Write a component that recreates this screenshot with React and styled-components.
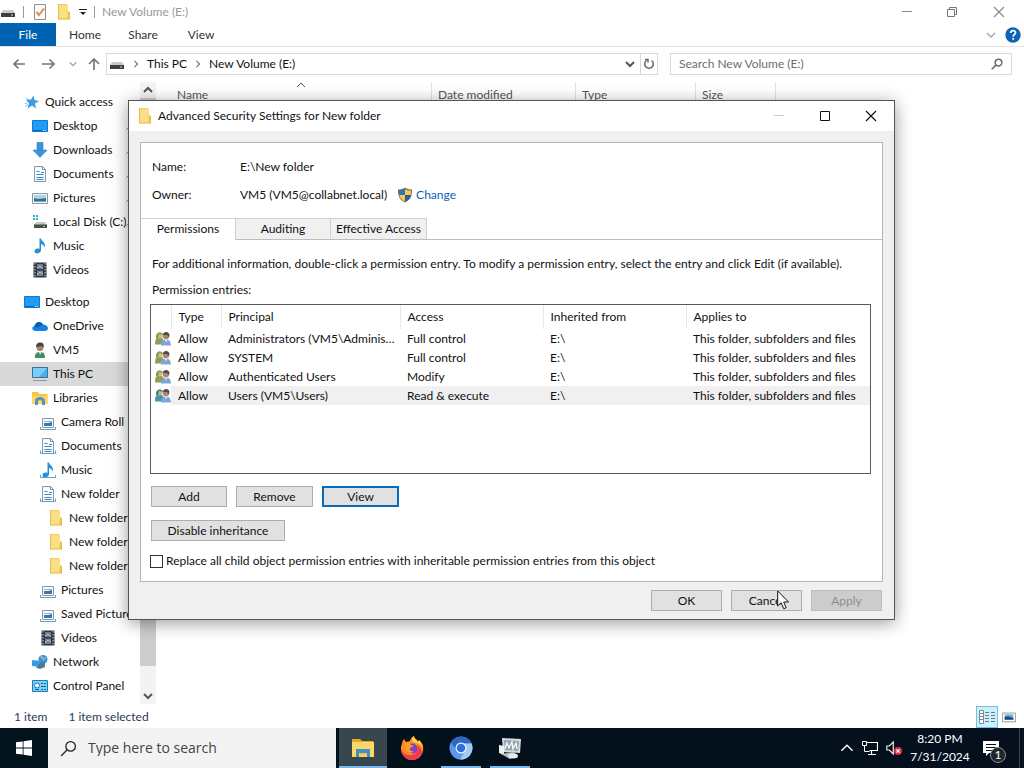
import React from 'react'
import styled, { createGlobalStyle } from 'styled-components'

const GlobalStyle = createGlobalStyle`
    * {
        box-sizing: border-box;
    }

    body {
        margin: 0;
        background: #fff;
        color: #111;
        font-family: Lato, "Open Sans", "Noto Sans", sans-serif;
        font-size: 12px;
        line-height: 16px;
    }

    button, input {
        font: inherit;
        color: inherit;
        border-radius: 0;
        margin: 0;
    }

    svg {
        display: block;
        flex: none;
    }
`

/* ---------- icons ---------- */

const Icon = ({ size = 16, width, height, box, children }) => (
    <svg width={width || size} height={height || size} viewBox={box || '0 0 16 16'} fill="none" aria-hidden="true">
        {children}
    </svg>
)

const DriveIcon = () => (
    <Icon>
        <path d="M3 6h10l2 3H1z" fill="#c9c9c9" />
        <path d="M1 9h14v4H1z" fill="#3c3f43" />
        <path d="M11 11h2" stroke="#cfd8cf" />
    </Icon>
)

const FolderIcon = () => (
    <Icon>
        <path d="M2 0h9l1 2v13.500H2z" fill="#f3cf5b" />
        <path d="M3 1h9v13.500H3z" fill="#fbdf86" />
        <path d="M12 7l2 1v7.500H2v-1h9z" fill="#f0c64e" />
        <path d="M2.500 0v15M13.500 8v7.500" stroke="#e6bd48" />
    </Icon>
)

const CheckPageIcon = () => (
    <Icon>
        <path d="M2.500.5h11v15h-11z" fill="#fafafa" stroke="#8d8d8d" />
        <path d="M4.500 8l2.500 3 5-6.500" stroke="#e08a4c" strokeWidth="2" />
    </Icon>
)

const StarIcon = () => (
    <Icon>
        <path d="M9.500 1.500l1 4.500 4.500 1-4 2.500 1 5-4-3-4.500 3 1.500-5L2 6l5-.5z" fill="#3d9be0" />
        <path d="M1 12.500l3-2M2 4.500l3 1M1 9.500h2" stroke="#7cc0ef" />
    </Icon>
)

const DesktopIcon = () => (
    <Icon>
        <path d="M.5 2.500h15v11H.5z" fill="#1e9bf5" stroke="#1477c9" />
        <path d="M1 12.500h9" stroke="#0d6cbb" />
        <path d="M11 12.500h1M13 12.500h1" stroke="#c9e8ff" />
    </Icon>
)

const DownloadIcon = () => (
    <Icon>
        <path d="M5 .5h6V8h4l-7 7.500L1 8h4z" fill="#3a93dd" stroke="#2b7cc2" strokeWidth=".6" />
    </Icon>
)

const DocumentIcon = ({ tray }) => (
    <Icon>
        <path d="M2.500.5h8l3 3v12h-11z" fill="#f6fafd" stroke="#8398ac" />
        <path d="M10.500.5v3h3" stroke="#8398ac" />
        <path d="M4.500 5.500h3M4.500 8.500h7M4.500 11.500h7M4.500 13.500h7M9 6.500h3" stroke="#4385bd" />
        {tray && <path d="M.5 12.500v3h15v-3M1 15.500h14" stroke="#5e9dcc" />}
    </Icon>
)

const PictureIcon = () => (
    <Icon>
        <path d="M.5 3.500h15v10H.5z" fill="#f4f7f9" stroke="#8b969e" />
        <path d="M2 5h12v7H2z" fill="#a9d5ee" />
        <path d="M2 8l4 1 8-1v4H2z" fill="#3a6f8c" />
        <path d="M2 11.500h12" stroke="#6fa8c8" />
    </Icon>
)

const PictureTrayIcon = () => (
    <Icon>
        <path d="M2.500 4.500h11v9h-11z" fill="#f4f8fb" stroke="#8699aa" />
        <path d="M4 9h4l4-1v4H4z" fill="#3f77a8" />
        <path d="M4 7.500h8" stroke="#8fb9da" />
        <path d="M.5 13v2.500h15V13" stroke="#5e9dcc" />
    </Icon>
)

const DiskIcon = () => (
    <Icon>
        <path d="M1 1h2v2H1zM4 1h2v2H4zM1 4h2v2H1zM4 4h2v2H4z" fill="#22b7c4" />
        <path d="M4 8h9l2 3H2z" fill="#c4c9c6" />
        <path d="M2 10.500h13V14H2z" fill="#45504a" />
        <path d="M11 12.500h2" stroke="#6fe07a" />
    </Icon>
)

const MusicIcon = ({ tray }) => (
    <Icon>
        <path d="M7.500.5H9c.5 3 5.500 4 3.500 9-.3-2-1.500-3-3.500-3.500V12c0 4-6.500 4.500-6.500 1.500 0-2.500 2.500-3.500 5-2.500z" fill="#2491d6" />
        {tray && <path d="M.5 13v2.500h15V13" stroke="#5e9dcc" />}
    </Icon>
)

const VideoIcon = () => (
    <Icon>
        <path d="M1.500.5h13v15h-13z" fill="#30343a" />
        <path d="M5 2h6v5H5zM5 8.500h6V14H5z" fill="#6d8294" />
        <path d="M5 6l3-2 3 3M5 13l3-3 3 2" stroke="#b9c9d6" />
        <path d="M3 1v14M13 1v14" stroke="#d7dade" strokeDasharray="1.500 1.500" />
    </Icon>
)

const CloudIcon = () => (
    <Icon>
        <path d="M3 13C-.5 12.500-.5 8.500 2.500 8 3 4 8.500 2 11 6.500c3 0 5 2 5 4 0 1.500-1.500 2.500-3 2.500z" fill="#1583dc" />
        <path d="M2.500 8C4 3.500 8.500 2.500 11 6.500L5 10z" fill="#0b5cb4" />
    </Icon>
)

const UserIcon = () => (
    <Icon>
        <path d="M3 16c-.5-4 1.500-6 5-6s5 2 5 6z" fill="#3c8f66" />
        <path d="M7 10l1 3 1.500-3z" fill="#e8f1ec" />
        <circle cx="8" cy="5.500" r="3.500" fill="#a98463" />
        <path d="M4 5C4 1 7 0 9 .5c3 .5 3 3 2.500 5L9.500 4z" fill="#3f4a3f" />
    </Icon>
)

const PcIcon = () => (
    <Icon>
        <path d="M.5 1.500h15v10H.5z" fill="#4aaef2" stroke="#3d6f96" />
        <path d="M1 2h14L7 11H1z" fill="#7accfb" />
        <path d="M1 14.500h14" stroke="#8b979f" />
    </Icon>
)

const LibraryIcon = () => (
    <Icon>
        <path d="M0 2h6l1 2h8.500v10H0z" fill="#f4c545" />
        <path d="M0 6h15.500v8H0z" fill="#fbd768" />
        <path d="M4.500 15v-3.500c0-4 7-4 7 0V15" stroke="#5b92bd" strokeWidth="3" />
    </Icon>
)

const NetworkIcon = () => (
    <Icon>
        <circle cx="11" cy="5.500" r="4.500" fill="#3f8fca" />
        <path d="M8 3c2 0 3 2 6 1M9 1.500l4 7" stroke="#a9d5ef" strokeWidth=".8" />
        <path d="M0 6l9 1v6l-9-1z" fill="#2f9fe6" />
        <path d="M9 8l4-1v6l-5 2-4-1.500z" fill="#4b7da2" />
    </Icon>
)

const ControlPanelIcon = () => (
    <Icon>
        <path d="M.5 2.500h15v11H.5z" fill="#7dcdf5" stroke="#1881bd" />
        <circle cx="5" cy="7.500" r="2.500" fill="#fff" stroke="#1576b5" />
        <path d="M9 5.500h2M12 5.500h2M9 8.500h5M3 11.500h4M9 11.500h2M12 11.500h2" stroke="#11649c" />
    </Icon>
)

const PinIcon = () => (
    <Icon size={8} box="0 0 8 8">
        <path d="M3 1l4 4M4 2L2 4l2 2 2-2M3 5L0 8" stroke="#999" />
    </Icon>
)

const GroupIcon = ({ blue }) => (
    <Icon>
        <path d="M0 13.500c0-5 1-7 4.500-7S9 9 9 13.500z" fill={blue ? '#4f93a6' : '#8ba05c'} />
        <circle cx="4.500" cy="4.500" r="3" fill={blue ? '#a9c3a0' : '#cdbf85'} />
        <path d="M1 7c-.5-6 6-7 7-3L4 3 3 8z" fill={blue ? '#4b8378' : '#8e9550'} />
        <path d="M6 14.500c0-4 1.500-6 5-6s4.500 2 5 6z" fill="#7fa5d8" />
        <path d="M10 8.500l1 3 1.500-3z" fill="#f0f4fa" />
        <circle cx="11" cy="5" r="3.300" fill="#b28668" />
        <path d="M8 4c0-4 6-4 6.500 0l-1 2-1.500-2z" fill="#524a48" />
    </Icon>
)

const ShieldIcon = () => (
    <Icon>
        <path d="M8 .5c2 1.500 4 2 7 2 0 6-1 10-7 13-6-3-7-7-7-13 3 0 5-.5 7-2z" fill="#6b6a55" />
        <path d="M8 2v6H2.200C2 6.500 2 5 2 3.500 4.500 3.500 6.500 3 8 2z" fill="#2c76c4" />
        <path d="M8 2v6h5.800c.2-1.500.2-3 .2-4.500C11.500 3.500 9.500 3 8 2z" fill="#f6c94b" />
        <path d="M8 8v6.500c-3.500-1.500-5.200-3.500-5.800-6.500z" fill="#f6c94b" />
        <path d="M8 8v6.500c3.500-1.500 5.200-3.500 5.800-6.500z" fill="#2460ab" />
    </Icon>
)

const Chevron = ({ dir = 'down', size = 10, color = '#555', weight = 1.5 }) => {
    const paths = {
        down: 'M1 3l4 4 4-4',
        up: 'M1 7l4-4 4 4',
        right: 'M3 1l4 4-4 4'
    }
    return (
        <Icon size={size} box="0 0 10 10">
            <path d={paths[dir]} stroke={color} strokeWidth={weight} />
        </Icon>
    )
}

const ArrowIcon = ({ d }) => (
    <Icon>
        <path d={d} stroke="#777" strokeWidth="1.700" />
    </Icon>
)

const MinimizeIcon = ({ color }) => (
    <Icon size={12} box="0 0 12 12"><path d="M1 5.500h10" stroke={color} /></Icon>
)

const MaximizeIcon = () => (
    <Icon size={12} box="0 0 12 12"><path d="M1.500 1.500h9v9h-9z" stroke="#111" /></Icon>
)

const RestoreIcon = () => (
    <Icon size={12} box="0 0 12 12">
        <path d="M1.500 3.500h7v7h-7zM3.500 3.500v-2h7v7h-2" stroke="#777" />
    </Icon>
)

const CloseIcon = ({ color }) => (
    <Icon size={12} box="0 0 12 12"><path d="M1 1l10 10M11 1L1 11" stroke={color} strokeWidth="1.200" /></Icon>
)

const HelpIcon = () => (
    <Icon>
        <circle cx="8" cy="8" r="7.700" fill="#0f63b5" />
        <path d="M5.700 6c0-3 4.800-3 4.800-.3 0 1.700-2.300 1.800-2.300 4M8.200 11v1.800" stroke="#fff" strokeWidth="1.700" />
    </Icon>
)

const RefreshIcon = () => (
    <Icon size={12} box="0 0 12 12">
        <path d="M8.500 2.500a4.300 4.300 0 1 1-5 0M2 1.500h3v3" stroke="#666" strokeWidth="1.500" />
    </Icon>
)

const SearchIcon = ({ size, color, weight }) => (
    <Icon size={size}>
        <circle cx="10" cy="6" r="4.500" stroke={color} strokeWidth={weight} />
        <path d="M6.800 9.200L1 15" stroke={color} strokeWidth={weight} />
    </Icon>
)

const MenuArrowIcon = () => (
    <Icon size={8} box="0 0 8 8"><path d="M0 1.500h8" stroke="#222" /><path d="M1 4h6L4 7z" fill="#222" /></Icon>
)

const DetailsViewIcon = () => (
    <Icon>
        <path d="M.5 1.500h4v13h-4z" fill="#fff" stroke="#7c8a92" />
        <path d="M1 4.500h3M1 7.500h3M1 10.500h3" stroke="#7c8a92" />
        <path d="M6 3.500h4M12 3.500h4M6 6.500h4M12 6.500h4M6 9.500h4M12 9.500h4M6 12.500h4M12 12.500h4" stroke="#6c7b84" />
    </Icon>
)

const ThumbViewIcon = () => (
    <Icon size={14}>
        <path d="M.5 3.500h15v10H.5z" fill="#fff" stroke="#8c8f94" />
        <path d="M3 5h10v6H3z" fill="#6fb0dc" />
        <path d="M3 8l4-1 6 2v2H3z" fill="#2a4d77" />
    </Icon>
)

const WindowsIcon = () => (
    <Icon>
        <path d="M0 2.300L6.700 1.400v6.200H0zM7.500 1.300L16 0v7.600H7.500zM0 8.400h6.700v6.200L0 13.700zM7.500 8.400H16V16l-8.500-1.300z" fill="#fff" />
    </Icon>
)

const ExplorerIcon = () => (
    <Icon size={24} box="0 0 24 24">
        <path d="M1 3h8l2 2h11v4H1z" fill="#e9a92d" />
        <path d="M1 6h22v15H1z" fill="#fbd768" />
        <path d="M5 13h14v8h-3v-4H8v4H5z" fill="#3f8fcb" />
        <path d="M8 17h8v2H8z" fill="#f3c14a" />
    </Icon>
)

const FirefoxIcon = () => (
    <Icon size={24} box="0 0 24 24">
        <path d="M2 8c0-2 1-4 2-5l2 3 4-1c0-2 2-4 4-5 0 3 3 3 4 6l1-2c3 3 5 6 4 11-1 5-5 9-11 9S1 19 1 13c0-2 0-3 1-5z" fill="#ff8a1e" />
        <path d="M14 0c0 3 3 3 4 6l1-2c2 2 4 5 4 8-2-4-6-5-10-6-2-2-1-5 1-6z" fill="#ffd43a" />
        <path d="M1 13c2 5 8 8 13 5 3-2 5-5 3-9 3 2 5 5 5 8-2 4-5 7-10 7S1 19 1 13z" fill="#f5384f" />
        <circle cx="12.500" cy="12.500" r="5" fill="#7c43c9" />
        <path d="M5 7c3-1 5 0 6 2l3 1-4 2c-1 2 1 4 4 3-4 4-10 1-9-8z" fill="#ff9a2a" />
    </Icon>
)

const ChromiumIcon = () => (
    <Icon size={24} box="0 0 24 24">
        <circle cx="12" cy="12" r="11.500" fill="#5d97ea" />
        <path d="M2 6.500a11.500 11.500 0 0 1 20.500 1H12L7.500 14z" fill="#2c68c4" />
        <path d="M22.500 7.500A11.500 11.500 0 0 1 11 23.500l5.500-9c1-3 0-5-2-7z" fill="#a9c9f5" />
        <circle cx="12" cy="12" r="5.500" fill="#f1f6fd" />
        <circle cx="12" cy="12" r="4.300" fill="#2d72d9" />
    </Icon>
)

const ServerIcon = () => (
    <Icon size={24} box="0 0 24 24">
        <path d="M4 2l19 1-1 14-17-1z" fill="#d5dadc" />
        <path d="M6 4l15 1-1 10-13-1z" fill="#8fa3ad" />
        <path d="M7 13l2-6 2 5 3-6 1 7 3-6 1 6" stroke="#f6fafb" strokeWidth="1.300" />
        <path d="M1 9l5 1v9l-5-2z" fill="#eceeef" />
        <path d="M3 18l12-2 5 3-8 4z" fill="#b7bec2" />
        <ellipse cx="15" cy="20" rx="5" ry="2.500" fill="#e8ebec" />
    </Icon>
)

const MonitorIcon = () => (
    <Icon>
        <path d="M4.500 2.500h11v8h-8M9.500 11v3M6 14.500h8" stroke="#fff" strokeWidth="1.200" />
        <path d="M.5 1.500h4v4h-4zM2.500 5.500v6h5" stroke="#fff" />
    </Icon>
)

const MutedIcon = () => (
    <Icon>
        <path d="M.8 6h2.500l4-4v12l-4-4H.8z" stroke="#e8e8e8" strokeWidth="1.200" />
        <circle cx="12" cy="11" r="4" fill="#d8323c" />
        <path d="M10.300 9.300l3.400 3.400M13.700 9.300l-3.400 3.400" stroke="#fff" strokeWidth="1.200" />
    </Icon>
)

const MessageIcon = () => (
    <Icon>
        <path d="M0 1h16v12H6l-3 3v-3H0z" fill="#fff" />
        <path d="M3 4.500h10M3 7.500h10M3 10.500h6" stroke="#07101d" />
    </Icon>
)

/* ---------- explorer window ---------- */

const Desktop = styled.div`
    position: relative;
    display: flex;
    flex-direction: column;
    height: 100vh;
    overflow: hidden;
`

const Explorer = styled.main`
    flex: 1;
    min-height: 0;
    display: flex;
    flex-direction: column;
`

const TitleBar = styled.header`
    display: flex;
    align-items: center;
    height: 23px;
    color: #999;
`

const QuickTools = styled.div`
    display: flex;
    align-items: center;
    gap: 7px;
    flex: 1;
`

const Divider = styled.span`
    width: 1px;
    height: 12px;
    background: #999;
`

const IconButton = styled.button`
    display: flex;
    align-items: center;
    justify-content: center;
    width: ${props => props.$width || 16}px;
    height: ${props => props.$height || 16}px;
    padding: 0;
    border: 0;
    background: transparent;
`

const Ribbon = styled.nav`
    display: flex;
    align-items: center;
    height: 24px;
    padding-right: 3px;
    border-bottom: 1px solid #e4e4e4;
`

const RibbonTab = styled.button`
    width: ${props => props.$primary ? 56 : 58}px;
    height: 23px;
    padding: 0;
    border: 0;
    color: ${props => props.$primary ? '#fff' : '#333'};
    background: ${props => props.$primary ? '#0063b1' : 'transparent'};
`

const Spacer = styled.span`
    flex: 1;
`

const AddressRow = styled.div`
    display: flex;
    align-items: center;
    height: 35px;
    padding: 0 12px 2px 11px;
`

const NavButtons = styled.div`
    display: flex;
    align-items: center;
    gap: 13px;
    width: 95px;
`

const AddressBar = styled.div`
    flex: 1;
    display: flex;
    align-items: center;
    gap: 7px;
    height: 22px;
    padding-left: 2px;
    border: 1px solid #d9d9d9;
`

const Crumb = styled.a`
    color: #111;
    text-decoration: none;
`

const RefreshBox = styled.div`
    display: flex;
    align-items: center;
    height: 20px;
    margin-left: -5px;
    border-left: 1px solid #d9d9d9;
`

const SearchBox = styled.label`
    display: flex;
    align-items: center;
    width: 342px;
    height: 22px;
    margin-left: 12px;
    padding: 0 8px;
    border: 1px solid #d9d9d9;

    input {
        flex: 1;
        min-width: 0;
        padding: 0;
        border: 0;
        outline: 0;
        background: transparent;
    }

    input::placeholder {
        color: #6d6d6d;
        opacity: 1;
    }
`

const Body = styled.div`
    flex: 1;
    min-height: 0;
    display: flex;
`

const Tree = styled.ul`
    width: 140px;
    margin: 0;
    padding: 8px 0 0;
    list-style: none;
    overflow: hidden;
`

const TreeRow = styled.li`
    display: flex;
    align-items: center;
    gap: 5px;
    height: 24px;
    margin-top: ${props => props.$gap ? 8 : 0}px;
    padding-left: ${props => 24 + props.$level * 8}px;
    white-space: nowrap;
    background: ${props => props.$selected ? '#d9d9d9' : 'transparent'};
`

const TreeLabel = styled.span`
    flex: 1;
    min-width: 0;
    overflow: hidden;
`

const PinSlot = styled.span`
    width: 14px;
    margin-left: -5px;
`

const Scrollbar = styled.div`
    display: flex;
    flex-direction: column;
    width: 16px;
    background: #f3f3f3;
`

const Thumb = styled.div`
    flex: 1;
    margin-bottom: 22px;
    background: #cdcdcd;
`

const Files = styled.section`
    flex: 1;
    padding-left: 15px;
`

const FileHeader = styled.div`
    display: flex;
    height: 26px;
`

const FileColumn = styled.div`
    position: relative;
    width: ${props => props.$width}px;
    padding: 5px 0 0 6px;
    border-right: 1px solid #e2e2e2;
    color: #555;
`

const SortMark = styled.span`
    position: absolute;
    top: -2px;
    left: calc(50% - 5px);
`

const StatusBar = styled.footer`
    display: flex;
    align-items: center;
    gap: 21px;
    height: 24px;
    padding: 1px 8px 0 14px;
    color: #2b3a57;
`

const ViewModes = styled.div`
    display: flex;
    align-items: center;
    gap: 4px;
    margin-left: auto;
`

const ViewMode = styled(IconButton)`
    width: ${props => props.$active ? 22 : 14}px;
    height: 22px;
    border: ${props => props.$active ? '1px solid #6cc3e4' : '0'};
    background: ${props => props.$active ? '#cdeefa' : 'transparent'};
`

/* ---------- security dialog ---------- */

const Dialog = styled.div`
    position: absolute;
    top: 100px;
    left: 128px;
    right: 129px;
    border: 1px solid #555;
    background: #f0f0f0;
    box-shadow: 0 3px 16px rgba(0, 0, 0, 0.4);
`

const DialogTitle = styled.div`
    display: flex;
    align-items: center;
    gap: 5px;
    height: 30px;
    padding-left: 8px;
    background: #fff;
`

const Title = styled.h1`
    flex: 1;
    margin: 0;
    font-size: 12px;
    font-weight: 400;
`

const WindowButtons = styled.div`
    display: flex;
`

const Panel = styled.div`
    height: 440px;
    margin: 11px 11px 0;
    border: 1px solid #b4b4b4;
    background: #fff;
`

const Facts = styled.dl`
    display: grid;
    grid-template-columns: 88px 1fr;
    row-gap: 12px;
    margin: 0;
    padding: 16px 11px 15px;

    dt, dd {
        margin: 0;
    }

    dd {
        display: flex;
        align-items: center;
    }
`

const ChangeLink = styled.a`
    display: flex;
    gap: 3px;
    margin-left: 10px;
    color: #0b61b5;
    text-decoration: none;
`

const Tabs = styled.div`
    display: flex;
    height: 22px;

    &::after {
        content: '';
        flex: 1;
        border-bottom: 1px solid #bdbdbd;
    }
`

const Tab = styled.button`
    width: ${props => props.$width}px;
    padding: 0;
    border: 1px solid #d0d0d0;
    border-left-width: ${props => props.$active ? 0 : 1}px;
    border-right-width: ${props => props.$last ? 1 : 0}px;
    border-bottom-color: ${props => props.$active ? '#fff' : '#bdbdbd'};
    background: ${props => props.$active ? '#fff' : '#f0f0f0'};
`

const TabBody = styled.div`
    padding: 16px 11px 0 9px;
`

const Note = styled.p`
    margin: 0 0 ${props => props.$gap}px 2px;
    white-space: nowrap;
`

const ListBox = styled.div`
    height: 170px;
    border: 1px solid #5a5a5a;
`

const Table = styled.table`
    width: 100%;
    table-layout: fixed;
    border-collapse: collapse;

    th, td {
        overflow: hidden;
        padding: 0 4px 0 7px;
        text-align: left;
        font-weight: 400;
        white-space: nowrap;
        text-overflow: ellipsis;
    }

    th {
        height: 24px;
        border-left: 1px solid #e8e8e8;
    }

    th:first-child {
        border-left: 0;
    }

    td {
        height: 19px;
    }

    td:first-child {
        padding: 0 0 0 4px;
    }
`

const EntryRow = styled.tr`
    td + td {
        background: ${props => props.$selected ? '#f0f0f0' : 'transparent'};
    }
`

const ButtonRow = styled.div`
    display: flex;
    justify-content: ${props => props.$end ? 'flex-end' : 'flex-start'};
    gap: 9px;
    padding: ${props => props.$end ? '8px 12px' : '12px 1px 1px'};
`

const Button = styled.button`
    position: relative;
    width: ${props => props.$width}px;
    height: 21px;
    padding: 0;
    line-height: 16px;
    border: ${props => props.$focused ? '2px solid #0a6cbd' : '1px solid #adadad'};
    background: #e1e1e1;

    &:disabled {
        border-color: #bfbfbf;
        background: #cccccc;
        color: #8f8f8f;
    }
`

const CheckLabel = styled.label`
    display: flex;
    align-items: center;
    gap: 3px;
    margin-top: 11px;
    white-space: nowrap;

    input {
        appearance: none;
        width: 13px;
        height: 13px;
        border: 1px solid #333;
        background: #fff;
    }
`

const Pointer = styled.span`
    position: absolute;
    top: -1px;
    left: 45px;
`

/* ---------- taskbar ---------- */

const Taskbar = styled.footer`
    display: flex;
    height: 40px;
    background: linear-gradient(90deg, #02131c, #050f1d);
    color: #fff;
`

const TaskSearch = styled.label`
    display: flex;
    align-items: center;
    gap: 11px;
    width: 288px;
    margin-right: 3px;
    padding-left: 12px;
    background: #f3f3f3;

    input {
        flex: 1;
        min-width: 0;
        padding: 0;
        border: 0;
        outline: 0;
        background: transparent;
        font-family: "Open Sans", "Noto Sans", sans-serif;
        font-size: 14px;
    }

    input::placeholder {
        color: #444;
        opacity: 1;
    }
`

const TaskButton = styled.button`
    display: flex;
    align-items: center;
    justify-content: center;
    width: 48px;
    margin-right: 1px;
    padding: 0;
    border: 0;
    background:
        linear-gradient(#76b9ed, #76b9ed) bottom / ${props => props.$active ? 48 : props.$open ? 40 : 0}px 2px no-repeat,
        ${props => props.$active ? '#38464e' : 'transparent'};
`

const Tray = styled.div`
    display: flex;
    align-items: center;
    gap: 8px;
    margin: 0 4px 0 auto;
    padding-right: 20px;
    border-right: 1px solid #3a424c;
`

const Clock = styled.time`
    width: 60px;
    margin-right: 5px;
    line-height: 18px;
    text-align: center;
`

const Notifications = styled.button`
    position: relative;
    padding: 0;
    border: 0;
    background: transparent;
`

const Badge = styled.span`
    position: absolute;
    top: 7px;
    left: 7px;
    width: 16px;
    height: 16px;
    border: 1px solid #8a8f96;
    border-radius: 50%;
    background: #1f262e;
    color: #fff;
    font-size: 12px;
    line-height: 14px;
`

const tree = [
    { label: 'Quick access', icon: <StarIcon />, level: 0 },
    { label: 'Desktop', icon: <DesktopIcon />, level: 1, pinned: true },
    { label: 'Downloads', icon: <DownloadIcon />, level: 1, pinned: true },
    { label: 'Documents', icon: <DocumentIcon />, level: 1, pinned: true },
    { label: 'Pictures', icon: <PictureIcon />, level: 1, pinned: true },
    { label: 'Local Disk (C:)', icon: <DiskIcon />, level: 1, pinned: true },
    { label: 'Music', icon: <MusicIcon />, level: 1 },
    { label: 'Videos', icon: <VideoIcon />, level: 1 },
    { label: 'Desktop', icon: <DesktopIcon />, level: 0, gap: true },
    { label: 'OneDrive', icon: <CloudIcon />, level: 1 },
    { label: 'VM5', icon: <UserIcon />, level: 1 },
    { label: 'This PC', icon: <PcIcon />, level: 1, selected: true },
    { label: 'Libraries', icon: <LibraryIcon />, level: 1 },
    { label: 'Camera Roll', icon: <PictureTrayIcon />, level: 2 },
    { label: 'Documents', icon: <DocumentIcon tray />, level: 2 },
    { label: 'Music', icon: <MusicIcon tray />, level: 2 },
    { label: 'New folder', icon: <DocumentIcon tray />, level: 2 },
    { label: 'New folder', icon: <FolderIcon />, level: 3 },
    { label: 'New folder', icon: <FolderIcon />, level: 3 },
    { label: 'New folder', icon: <FolderIcon />, level: 3 },
    { label: 'Pictures', icon: <PictureTrayIcon />, level: 2 },
    { label: 'Saved Pictures', icon: <PictureTrayIcon />, level: 2 },
    { label: 'Videos', icon: <VideoIcon />, level: 2 },
    { label: 'Network', icon: <NetworkIcon />, level: 1 },
    { label: 'Control Panel', icon: <ControlPanelIcon />, level: 1 }
]

const entries = [
    { principal: 'Administrators (VM5\\Administrators)', access: 'Full control' },
    { principal: 'SYSTEM', access: 'Full control' },
    { principal: 'Authenticated Users', access: 'Modify' },
    { principal: 'Users (VM5\\Users)', access: 'Read & execute', selected: true }
]

const ExplorerWindow = () => (
    <Explorer>
        <TitleBar>
            <QuickTools>
                <DriveIcon />
                <Divider />
                <IconButton aria-label="Properties" $width={18}><CheckPageIcon /></IconButton>
                <IconButton aria-label="New folder"><FolderIcon /></IconButton>
                <IconButton aria-label="Customize" $width={8}><MenuArrowIcon /></IconButton>
                <Divider />
                <span>New Volume (E:)</span>
            </QuickTools>
            <IconButton aria-label="Minimize" $width={45}><MinimizeIcon color="#888" /></IconButton>
            <IconButton aria-label="Restore" $width={45}><RestoreIcon /></IconButton>
            <IconButton aria-label="Close" $width={50}><CloseIcon color="#888" /></IconButton>
        </TitleBar>
        <Ribbon>
            <RibbonTab $primary>File</RibbonTab>
            <RibbonTab>Home</RibbonTab>
            <RibbonTab>Share</RibbonTab>
            <RibbonTab>View</RibbonTab>
            <Spacer />
            <IconButton aria-label="Expand the ribbon" $width={28}><Chevron color="#aaa" /></IconButton>
            <IconButton aria-label="Help"><HelpIcon /></IconButton>
        </Ribbon>
        <AddressRow>
            <NavButtons>
                <IconButton aria-label="Back"><ArrowIcon d="M14 8H3M7.500 3.500L3 8l4.500 4.500" /></IconButton>
                <IconButton aria-label="Forward"><ArrowIcon d="M2 8h12M9.500 3.500L14 8l-4.500 4.500" /></IconButton>
                <IconButton aria-label="Recent locations" $width={8}><Chevron size={8} color="#999" /></IconButton>
                <IconButton aria-label="Up" $width={8}><ArrowIcon d="M8 14V3M3 8l5-5 5 5" /></IconButton>
            </NavButtons>
            <AddressBar>
                <DriveIcon />
                <Chevron dir="right" size={8} color="#777" />
                <Crumb href="#this-pc">This PC</Crumb>
                <Chevron dir="right" size={8} color="#777" />
                <Crumb href="#volume">New Volume (E:)</Crumb>
                <Spacer />
                <IconButton aria-label="Previous locations"><Chevron weight={2} /></IconButton>
                <RefreshBox>
                    <IconButton aria-label="Refresh"><RefreshIcon /></IconButton>
                </RefreshBox>
            </AddressBar>
            <SearchBox>
                <input type="text" aria-label="Search New Volume (E:)" placeholder="Search New Volume (E:)" />
                <SearchIcon size={12} color="#666" weight={2} />
            </SearchBox>
        </AddressRow>
        <Body>
            <Tree>
                {tree.map((item, i) => (
                    <TreeRow key={i} $level={item.level} $gap={item.gap} $selected={item.selected}>
                        {item.icon}
                        <TreeLabel>{item.label}</TreeLabel>
                        {item.pinned && <PinSlot><PinIcon /></PinSlot>}
                    </TreeRow>
                ))}
            </Tree>
            <Scrollbar>
                <IconButton aria-label="Scroll up"><Chevron dir="up" weight={2} /></IconButton>
                <Thumb />
                <IconButton aria-label="Scroll down"><Chevron weight={2} /></IconButton>
            </Scrollbar>
            <Files>
                <FileHeader>
                    <FileColumn $width={261}>
                        Name
                        <SortMark><Chevron dir="up" weight={1} /></SortMark>
                    </FileColumn>
                    <FileColumn $width={144}>Date modified</FileColumn>
                    <FileColumn $width={120}>Type</FileColumn>
                    <FileColumn $width={80}>Size</FileColumn>
                </FileHeader>
            </Files>
        </Body>
        <StatusBar>
            <span>1 item</span>
            <span>1 item selected</span>
            <ViewModes>
                <ViewMode aria-label="Details view" $active><DetailsViewIcon /></ViewMode>
                <ViewMode aria-label="Large thumbnails"><ThumbViewIcon /></ViewMode>
            </ViewModes>
        </StatusBar>
    </Explorer>
)

const SecurityDialog = () => (
    <Dialog role="dialog" aria-labelledby="dialog-title">
        <DialogTitle>
            <FolderIcon />
            <Title id="dialog-title">Advanced Security Settings for New folder</Title>
            <WindowButtons>
                <IconButton aria-label="Minimize dialog" $width={46}><MinimizeIcon color="#ccc" /></IconButton>
                <IconButton aria-label="Maximize dialog" $width={46}><MaximizeIcon /></IconButton>
                <IconButton aria-label="Close dialog" $width={46}><CloseIcon color="#111" /></IconButton>
            </WindowButtons>
        </DialogTitle>
        <Panel>
            <Facts>
                <dt>Name:</dt>
                <dd>E:\New folder</dd>
                <dt>Owner:</dt>
                <dd>
                    VM5 (VM5@collabnet.local)
                    <ChangeLink href="#change"><ShieldIcon />Change</ChangeLink>
                </dd>
            </Facts>
            <Tabs role="tablist">
                <Tab role="tab" $width={94} $active>Permissions</Tab>
                <Tab role="tab" $width={95}>Auditing</Tab>
                <Tab role="tab" $width={97} $last>Effective Access</Tab>
            </Tabs>
            <TabBody>
                <Note $gap={10}>
                    For additional information, double-click a permission entry. To modify a permission entry, select the entry and click Edit (if available).
                </Note>
                <Note $gap={6}>Permission entries:</Note>
                <ListBox>
                    <Table>
                        <colgroup>
                            <col width="20" />
                            <col width="50" />
                            <col width="179" />
                            <col width="143" />
                            <col width="143" />
                            <col />
                        </colgroup>
                        <thead>
                            <tr>
                                <th aria-label="Icon" />
                                <th>Type</th>
                                <th>Principal</th>
                                <th>Access</th>
                                <th>Inherited from</th>
                                <th>Applies to</th>
                            </tr>
                        </thead>
                        <tbody>
                            {entries.map(entry => (
                                <EntryRow key={entry.principal} $selected={entry.selected}>
                                    <td><GroupIcon blue={entry.selected} /></td>
                                    <td>Allow</td>
                                    <td>{entry.principal}</td>
                                    <td>{entry.access}</td>
                                    <td>E:\</td>
                                    <td>This folder, subfolders and files</td>
                                </EntryRow>
                            ))}
                        </tbody>
                    </Table>
                </ListBox>
                <ButtonRow>
                    <Button $width={76}>Add</Button>
                    <Button $width={77}>Remove</Button>
                    <Button $width={77} $focused>View</Button>
                </ButtonRow>
                <ButtonRow>
                    <Button $width={134}>Disable inheritance</Button>
                </ButtonRow>
                <CheckLabel>
                    <input type="checkbox" />
                    Replace all child object permission entries with inheritable permission entries from this object
                </CheckLabel>
            </TabBody>
        </Panel>
        <ButtonRow $end>
            <Button $width={71}>OK</Button>
            <Button $width={71}>
                Cancel
                <Pointer>
                    <Icon width={12} height={20} box="0 0 12 20">
                        <path d="M.7 1v15l3.500-3.300 2.500 6 2.500-1-2.500-5.700h4.800z" fill="#fff" stroke="#111" />
                    </Icon>
                </Pointer>
            </Button>
            <Button $width={71} disabled>Apply</Button>
        </ButtonRow>
    </Dialog>
)

const App = () => (
    <Desktop>
        <GlobalStyle />
        <ExplorerWindow />
        <SecurityDialog />
        <Taskbar>
            <IconButton aria-label="Start" $width={48} $height={40}><WindowsIcon /></IconButton>
            <TaskSearch>
                <SearchIcon size={17} color="#222" weight={1.2} />
                <input type="text" aria-label="Type here to search" placeholder="Type here to search" />
            </TaskSearch>
            <TaskButton aria-label="File Explorer" $active><ExplorerIcon /></TaskButton>
            <TaskButton aria-label="Firefox"><FirefoxIcon /></TaskButton>
            <TaskButton aria-label="Chromium" $open><ChromiumIcon /></TaskButton>
            <TaskButton aria-label="Server monitor" $open><ServerIcon /></TaskButton>
            <Tray>
                <Chevron dir="up" size={14} color="#fff" weight={1} />
                <MonitorIcon />
                <MutedIcon />
                <Clock>8:20 PM<br />7/31/2024</Clock>
                <Notifications aria-label="Notifications">
                    <MessageIcon />
                    <Badge>1</Badge>
                </Notifications>
            </Tray>
        </Taskbar>
    </Desktop>
)

export default App
